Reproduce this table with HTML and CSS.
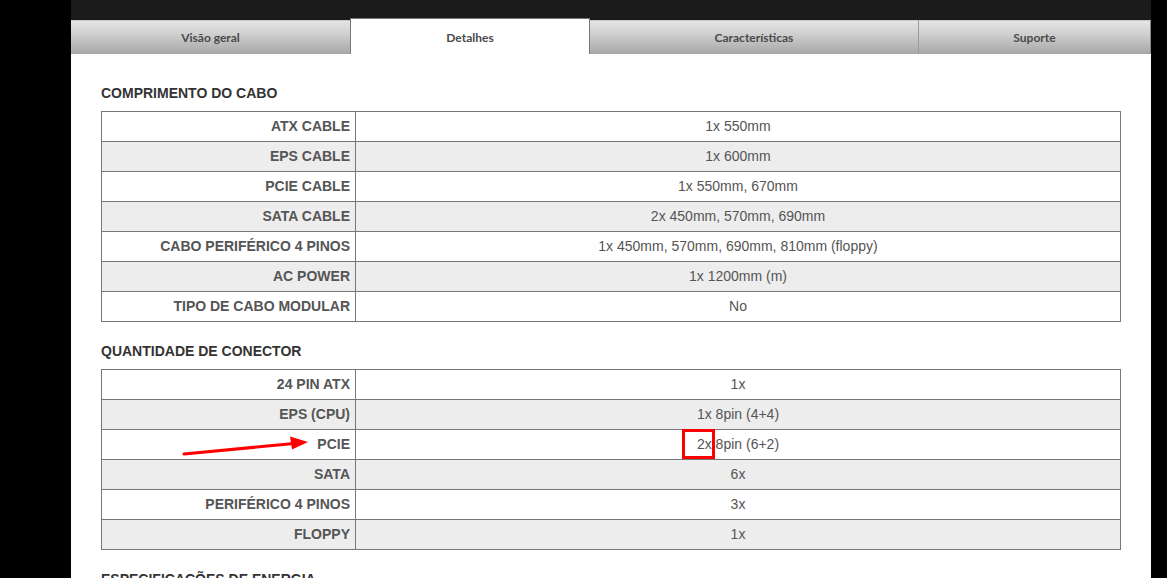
FILE: index.html
```html
<!DOCTYPE html>
<html lang="pt">
<head>
<meta charset="utf-8">
<link rel="stylesheet" href="styles.css">
</head>
<body>
<div class="page">
  <div class="topbar"></div>
  <nav class="tabs">
    <div class="tab t1">Visão geral</div>
    <div class="tab t2 active">Detalhes</div>
    <div class="tab t3">Características</div>
    <div class="tab t4">Suporte</div>
  </nav>
  <main class="content">
    <h3 class="section-title">COMPRIMENTO DO CABO</h3>
    <table class="spec">
      <colgroup><col class="label-col"><col></colgroup>
      <tr><th>ATX CABLE</th><td>1x 550mm</td></tr>
      <tr><th>EPS CABLE</th><td>1x 600mm</td></tr>
      <tr><th>PCIE CABLE</th><td>1x 550mm, 670mm</td></tr>
      <tr><th>SATA CABLE</th><td>2x 450mm, 570mm, 690mm</td></tr>
      <tr><th>CABO PERIFÉRICO 4 PINOS</th><td>1x 450mm, 570mm, 690mm, 810mm (floppy)</td></tr>
      <tr><th>AC POWER</th><td>1x 1200mm (m)</td></tr>
      <tr><th>TIPO DE CABO MODULAR</th><td>No</td></tr>
    </table>
    <h3 class="section-title">QUANTIDADE DE CONECTOR</h3>
    <table class="spec">
      <colgroup><col class="label-col"><col></colgroup>
      <tr><th>24 PIN ATX</th><td>1x</td></tr>
      <tr><th>EPS (CPU)</th><td>1x 8pin (4+4)</td></tr>
      <tr><th>PCIE</th><td>2x 8pin (6+2)</td></tr>
      <tr><th>SATA</th><td>6x</td></tr>
      <tr><th>PERIFÉRICO 4 PINOS</th><td>3x</td></tr>
      <tr><th>FLOPPY</th><td>1x</td></tr>
    </table>
    <h3 class="section-title">ESPECIFICAÇÕES DE ENERGIA</h3>
  </main>
  <svg class="arrow" width="140" height="24" viewBox="0 0 140 24">
    <line x1="2" y1="20" x2="112" y2="9.5" stroke="#f00" stroke-width="3" stroke-linecap="round"/>
    <polygon points="126,8 108,2.5 110,15.5" fill="#f00"/>
  </svg>
  <div class="highlight"></div>
</div>
</body>
</html>
```

FILE: styles.css
```css
html, body {
  margin: 0;
  padding: 0;
  background: #000;
}
body {
  font-family: "Liberation Sans", Arial, sans-serif;
  height: 578px;
  overflow: hidden;
}
.page {
  position: relative;
  width: 1080px;
  margin-left: 71px;
  background: #fff;
  min-height: 578px;
}
.topbar {
  height: 20px;
  background: #1b1b1b;
}
.tabs {
  display: flex;
  height: 34px;
}
.tab {
  box-sizing: border-box;
  height: 34px;
  border-top: 1px solid #c9c9c9;
  background: linear-gradient(to bottom, #e4e4e4 0%, #d2d2d2 35%, #a7a7a7 100%);
  display: flex;
  align-items: center;
  justify-content: center;
  font-family: Lato, "Open Sans", sans-serif;
  font-weight: 700;
  font-size: 12px;
  color: #4a4a4a;
  padding-bottom: 1px;
}
.t1 { width: 279px; }
.t2 { width: 240px; }
.t3 { width: 328px; }
.t4 { width: 233px; border-left: 1px solid #9a9a9a; border-right: 1px solid #8a8a8a; }
.tab.active {
  background: #fff;
  border: 1px solid #777;
  border-bottom: none;
  height: 36px;
  margin-top: -2px;
  padding-top: 2px;
  padding-bottom: 0;
}
.content {
  padding: 30px 30px 0 30px;
}
.section-title {
  margin: 0 0 9px 0;
  font-size: 14px;
  line-height: 18px;
  font-weight: 700;
  color: #333;
}
.spec + .section-title {
  margin-top: 20px;
}
.spec {
  width: 1020px;
  border-collapse: collapse;
  border: 1px solid #777;
  font-size: 14px;
  color: #555;
}
.label-col { width: 254px; }
.spec th, .spec td {
  border: 1px solid #777;
  height: 28px;
  padding: 0 0 1px 0;
  line-height: 16px;
}
.spec th {
  text-align: right;
  padding-right: 5px;
  font-weight: 700;
}
.spec td {
  text-align: center;
  font-weight: 400;
}
.spec tr:nth-child(even) th,
.spec tr:nth-child(even) td {
  background: #ededed;
}
.arrow {
  position: absolute;
  left: 111px;
  top: 434px;
}
.highlight {
  position: absolute;
  left: 611px;
  top: 429px;
  width: 27px;
  height: 24px;
  border: 3px solid #f00;
}
```
